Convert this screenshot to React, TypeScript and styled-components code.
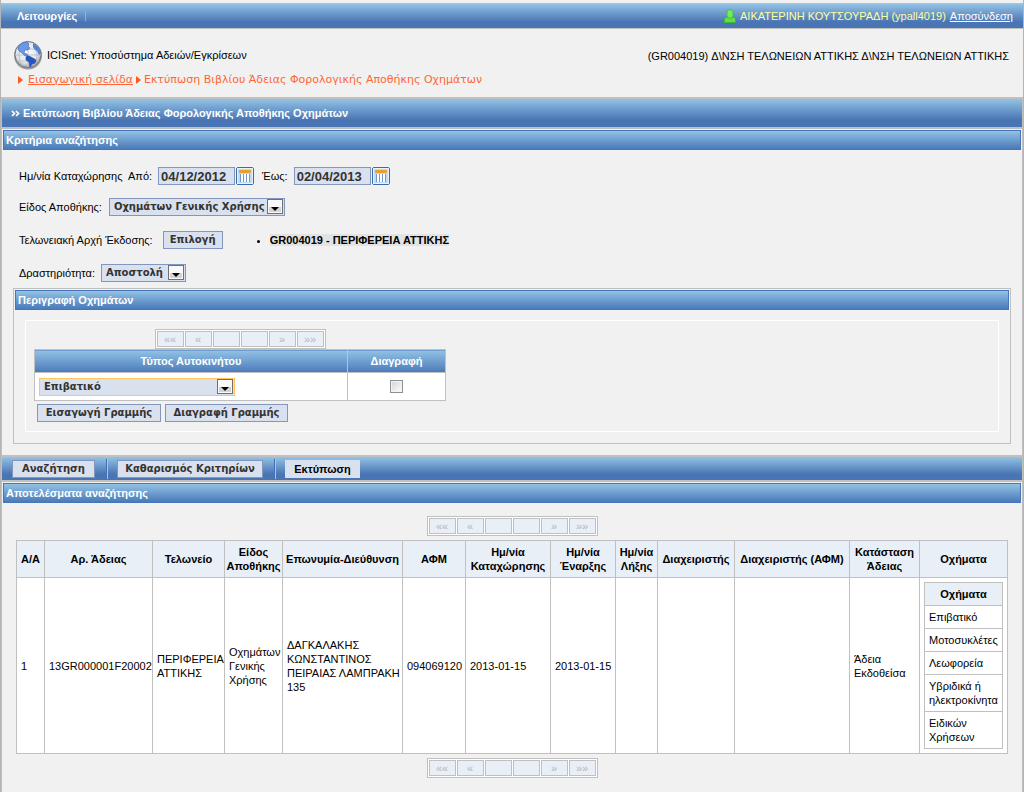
import React from 'react';
import styled, { createGlobalStyle } from 'styled-components';

const GlobalStyle = createGlobalStyle`
  * { box-sizing: border-box; }
  body {
    margin: 0;
    background: #f1f1f1;
    font: 11px/14px "Liberation Sans", Arial, sans-serif;
    color: #000;
  }
`;

const line = '#c0c0c0';
const blue = 'linear-gradient(#92c2e4, #4a75b5 75%)';
const strip = 'linear-gradient(#92c2e4, #4a7ab9)';
const wide = '"DejaVu Sans", Verdana, sans-serif';

const Page = styled.div`
  min-height: 100vh;
  padding-top: 3px;
  border-left: 1px solid #b4b4b4;
  border-right: 1px solid #b4b4b4;
`;

const NavBar = styled.nav`
  display: flex;
  align-items: center;
  height: 26px;
  padding: 0 10px 0 16px;
  border-top: 1px solid ${line};
  border-bottom: 1px solid ${line};
  background: ${blue};
  color: #fff;
`;

const NavItem = styled.a`
  padding-right: 8px;
  border-right: 1px solid #8fb4dc;
  line-height: 10px;
  font-weight: bold;
  color: #fff;
  text-decoration: none;
`;

const User = styled.div`
  display: flex;
  align-items: center;
  gap: 4px;
  margin-left: auto;
  color: #ffff99;
`;

const NavLink = styled.a`
  color: #fff;
`;

const Header = styled.header`
  display: flex;
  justify-content: space-between;
  height: 68px;
  padding: 10px 14px 0 12px;
`;

const Brand = styled.div`
  display: flex;
  align-items: center;
  height: 32px;
  gap: 4px;
`;

const Office = styled.div`
  padding-top: 10px;
`;

const Crumbs = styled.div`
  display: flex;
  align-items: center;
  gap: 3px;
  padding-left: 5px;
  font: 11px/18px ${wide};
  color: #ff6633;

  a {
    margin-left: 2px;
    color: inherit;
  }
`;

const Main = styled.main`
  border-left: 1px solid ${line};
  border-right: 1px solid ${line};
`;

const PageTitle = styled.h1`
  height: 32px;
  margin: 0;
  padding-left: 9px;
  border-top: 2px solid ${line};
  border-bottom: 2px solid ${line};
  background: ${blue};
  font: bold 11px/29px "Liberation Sans", Arial, sans-serif;
  color: #fff;
`;

const SectionTitle = styled.h2`
  height: 20px;
  margin: 1px 1px 0;
  padding-left: 2px;
  border: 1px solid #4676b8;
  background: ${strip};
  font: bold 11px/18px "Liberation Sans", Arial, sans-serif;
  color: #fff;
`;

const Criteria = styled.form`
  margin: 0;
`;

const Field = styled.div<{ $top: number }>`
  display: flex;
  align-items: center;
  height: 18px;
  margin-top: ${(p) => p.$top}px;
  padding-left: 17px;
`;

const Label = styled.label<{ $gap: number }>`
  margin-right: ${(p) => p.$gap}px;
  white-space: nowrap;
`;

const DateBox = styled.input`
  width: 77px;
  height: 18px;
  padding: 1px 2px;
  border: 1px solid #8296be;
  background: #d9e0ee;
  font: bold 13px "Liberation Sans", Arial, sans-serif;
  color: #333;
`;

const IconButton = styled.button`
  display: block;
  width: 18px;
  height: 18px;
  margin: 0 8px 0 1px;
  padding: 0;
  border: 0;
  background: none;

  svg { display: block; }
`;

const SelectFrame = styled.span<{ $width: number; $active?: boolean }>`
  display: grid;
  grid-template-columns: 1fr 18px;
  width: ${(p) => p.$width}px;
  height: 18px;
  border: 1px solid ${(p) => (p.$active ? '#ffc55c' : '#8296be')};
  background: #d9e0ee;

  select, svg { grid-row: 1; }
  select {
    grid-column: 1 / 3;
    appearance: none;
    height: 16px;
    padding: 0 4px;
    border: 0;
    background: none;
    font: bold 10px/16px ${wide};
    color: #333;
  }
  svg { grid-column: 2; pointer-events: none; }
`;

const Button = styled.button<{ $width: number }>`
  width: ${(p) => p.$width}px;
  height: 18px;
  padding: 0;
  border: 1px solid #8296be;
  background: #d9e0ee;
  font: bold 10px/16px ${wide};
  color: #333;
  white-space: nowrap;
`;

const PlainButton = styled(Button)`
  border-color: #d9e0ee;
  font-family: "Liberation Sans", Arial, sans-serif;
  font-size: 11px;
  color: #000;
`;

const Offices = styled.ul`
  margin: 0 0 0 47px;
  padding: 0;
  font-weight: bold;

  span { background: #e3e3e3; }
`;

const Vehicles = styled.fieldset`
  height: 156px;
  min-width: 0;
  margin: 6px 11px 0 11px;
  padding: 0 0 11px;
  border: 1px solid ${line};
`;

const Inner = styled.div`
  height: 112px;
  margin: 10px 11px 0;
  padding: 8px 9px 0 8px;
  border: 1px solid #fff;
`;

const VehicleGrid = styled.div`
  display: flex;
  flex-direction: column;
  align-items: center;
  width: 412px;
`;

const PagerFrame = styled.div`
  display: flex;
  gap: 1px;
  width: 171px;
  height: 20px;
  padding: 1px;
  border: 1px solid ${line};
  background: #fff;

  button {
    width: 27px;
    height: 16px;
    padding: 0;
    border: 1px solid ${line};
    background: #e8eff7;
    font: 11px/14px "Liberation Sans", Arial, sans-serif;
    color: #b4b4b4;
  }
`;

const VehicleTable = styled.table`
  width: 100%;
  border-collapse: collapse;
  background: #fff;

  th, td { border: 1px solid ${line}; }
  th {
    height: 23px;
    padding: 0;
    background: ${strip};
    color: #fff;
  }
  td { height: 28px; padding: 0 4px; }
  td:last-child { text-align: center; }
  input { display: block; width: 13px; height: 13px; margin: 0 auto; }
`;

const CheckBox = styled.input`
  appearance: none;
  border: 1px solid #8e8f8f;
  background: linear-gradient(135deg, #cfd3da, #fff);
  box-shadow: inset 0 0 0 1px #f4f4f4;
`;

const RowActions = styled.div`
  display: flex;
  gap: 4px;
  padding: 3px 0 0 3px;
`;

const ActionBar = styled.div`
  display: flex;
  align-items: center;
  height: 27px;
  margin-top: 11px;
  padding-left: 10px;
  border-top: 2px solid ${line};
  border-bottom: 2px solid ${line};
  background: ${blue};
`;

const Divider = styled.span`
  width: 2px;
  height: 20px;
  margin: 0 9px 0 11px;
  border-left: 1px solid #4070b4;
  border-right: 1px solid #a8c8e8;
`;

const Results = styled.section`
  padding-bottom: 14px;

  ${SectionTitle} { margin-bottom: 13px; }
  ${PagerFrame} { margin: 0 auto; }
`;

const ResultTable = styled.table`
  width: calc(100% - 28px);
  margin: 4px 14px;
  border-collapse: collapse;
  table-layout: fixed;
  background: #fff;

  th, td { border: 1px solid ${line}; }
  th {
    padding: 4px 0;
    background: #e8eff7;
    text-align: center;
  }
  td {
    padding: 4px 0 4px 4px;
    text-align: left;
  }
  td:last-child { padding-right: 4px; }
`;

const TypeTable = styled.table`
  width: 100%;
  border-collapse: collapse;

  td:last-child { padding-right: 0; }
`;

const Globe = () => (
  <svg width="30" height="30" viewBox="0 0 30 30" aria-hidden="true">
    <defs>
      <radialGradient id="sea" cx="45%" cy="40%" r="60%">
        <stop offset="0" stopColor="#fff" />
        <stop offset="0.7" stopColor="#dfe3ea" />
        <stop offset="1" stopColor="#a4a9b2" />
      </radialGradient>
    </defs>
    <circle cx="15" cy="15.500" r="14" fill="#999" />
    <circle cx="15" cy="14.500" r="13" fill="url(#sea)" stroke="#777" />
    <path d="M4 9h22M2 15h26M4 21h22M15 2v25M9 3q-6 12 0 23M21 3q6 12 0 23" fill="none" stroke="#b4bac4" strokeWidth="0.800" />
    <path d="M6 6Q9 2 14 2L16 4L15 6L17 8L15 10L12 10L11 13L14 14L15 16L12 16L9 13L6 11L5 8Z" fill="#6a9ae6" stroke="#3a68bc" strokeWidth="0.600" />
    <path d="M13 17Q15 15 18 17L23 20L22 23L19 24L17 27L16 22L13 20Z" fill="#2458bc" stroke="#1c4698" strokeWidth="0.600" />
    <path d="M20 3Q26 6 28 13L26 15L24 11L22 10L20 7Z" fill="#4f83d8" />
  </svg>
);

const Person = () => (
  <svg width="12" height="14" viewBox="0 0 12 14" aria-hidden="true">
    <path d="M0.500 13.500V10.500Q0.500 8 3 8H9Q11.500 8 11.500 10.500V13.500Z" fill="#5ee048" stroke="#3cb834" />
    <path d="M3 3.500Q3 0.500 6 0.500Q9 0.500 9 3.500V6.500L7.500 9H4.500L3 6.500Z" fill="#78ea5e" stroke="#46c03c" />
  </svg>
);

const Arrow = () => (
  <svg width="5" height="8" viewBox="0 0 5 8" aria-hidden="true">
    <path d="M0 0L5 4L0 8Z" fill="#ff5a1e" />
  </svg>
);

const Guillemet = () => (
  <svg width="9" height="7" viewBox="0 0 9 7" aria-hidden="true">
    <path d="M1 1L3.500 3.500L1 6M5 1L7.500 3.500L5 6" fill="none" stroke="#fff" strokeWidth="1.700" />
  </svg>
);

const Calendar = () => (
  <svg width="18" height="18" viewBox="0 0 18 18" aria-hidden="true">
    <rect x="0.500" y="0.500" width="17" height="17" rx="1.500" fill="#c4dbf5" stroke="#3a6cb4" />
    <rect x="1.500" y="1.500" width="15" height="15" fill="none" stroke="#e6f1fc" />
    <rect x="4" y="6" width="10" height="9" fill="#fff" />
    <rect x="3" y="3" width="12" height="3" rx="1" fill="#e8a02c" />
    <path d="M4.500 6V15M7.500 6V15M10.500 6V15M13.500 6V15" stroke="#7398cc" />
    <path d="M3 6.500H15" stroke="#f4d48c" />
  </svg>
);

const DropArrow = () => (
  <svg width="18" height="16" viewBox="0 0 18 16" aria-hidden="true">
    <rect x="1.500" y="0.500" width="15" height="14" fill="#f8f8f8" stroke="#707070" />
    <path d="M3 8H15V13H3Z" fill="#d4d4d4" />
    <path d="M5 8H13L9 12Z" fill="#000" />
  </svg>
);

const Select = ({ id, width, value, active }: { id: string; width: number; value: string; active?: boolean }) => (
  <SelectFrame $width={width} $active={active}>
    <select id={id} aria-label={active ? 'Τύπος Αυτοκινήτου' : undefined} defaultValue={value}>
      <option>{value}</option>
    </select>
    <DropArrow />
  </SelectFrame>
);

const Pager = () => (
  <PagerFrame>
    {['««', '«', '', '', '»', '»»'].map((text, i) => (
      <button type="button" key={i}>{text}</button>
    ))}
  </PagerFrame>
);

const columns: [string, number][] = [
  ['Α/Α', 28], ['Αρ. Άδειας', 108], ['Τελωνείο', 72], ['Είδος Αποθήκης', 58],
  ['Επωνυμία-Διεύθυνση', 120], ['ΑΦΜ', 63], ['Ημ/νία Καταχώρησης', 85],
  ['Ημ/νία Έναρξης', 65], ['Ημ/νία Λήξης', 42], ['Διαχειριστής', 77],
  ['Διαχειριστής (ΑΦΜ)', 115], ['Κατάσταση Άδειας', 70], ['Οχήματα', 88],
];

const values = [
  '1', '13GR000001F20002', 'ΠΕΡΙΦΕΡΕΙΑ ΑΤΤΙΚΗΣ', 'Οχημάτων Γενικής Χρήσης',
  'ΔΑΓΚΑΛΑΚΗΣ ΚΩΝΣΤΑΝΤΙΝΟΣ ΠΕΙΡΑΙΑΣ ΛΑΜΠΡΑΚΗ 135', '094069120', '2013-01-15',
  '2013-01-15', '', '', '', 'Άδεια Εκδοθείσα',
];

const types = ['Επιβατικό', 'Μοτοσυκλέτες', 'Λεωφορεία', 'Υβριδικά ή ηλεκτροκίνητα', 'Ειδικών Χρήσεων'];

export default function App() {
  return (
    <Page>
      <GlobalStyle />
      <NavBar>
        <NavItem href="#menu">Λειτουργίες</NavItem>
        <User>
          <Person />
          <span>ΑΙΚΑΤΕΡΙΝΗ ΚΟΥΤΣΟΥΡΑΔΗ (ypall4019)</span>
          <NavLink href="#logout">Αποσύνδεση</NavLink>
        </User>
      </NavBar>
      <Header>
        <div>
          <Brand>
            <Globe />
            <span>ICISnet: Υποσύστημα Αδειών/Εγκρίσεων</span>
          </Brand>
          <Crumbs>
            <Arrow />
            <a href="#home">Εισαγωγική σελίδα</a>
            <Arrow />
            <span>Εκτύπωση Βιβλίου Άδειας Φορολογικής Αποθήκης Οχημάτων</span>
          </Crumbs>
        </div>
        <Office>(GR004019) Δ\ΝΣΗ ΤΕΛΩΝΕΙΩΝ ΑΤΤΙΚΗΣ Δ\ΝΣΗ ΤΕΛΩΝΕΙΩΝ ΑΤΤΙΚΗΣ</Office>
      </Header>
      <Main>
        <PageTitle><Guillemet /> Εκτύπωση Βιβλίου Άδειας Φορολογικής Αποθήκης Οχημάτων</PageTitle>
        <Criteria>
          <SectionTitle>Κριτήρια αναζήτησης</SectionTitle>
          <Field $top={17}>
            <Label htmlFor="from" $gap={6}>Ημ/νία Καταχώρησης&nbsp; Από:</Label>
            <DateBox id="from" defaultValue="04/12/2012" />
            <IconButton type="button" aria-label="Ημερολόγιο"><Calendar /></IconButton>
            <Label htmlFor="to" $gap={6}>Έως:</Label>
            <DateBox id="to" defaultValue="02/04/2013" />
            <IconButton type="button" aria-label="Ημερολόγιο"><Calendar /></IconButton>
          </Field>
          <Field $top={13}>
            <Label htmlFor="kind" $gap={7}>Είδος Αποθήκης:</Label>
            <Select id="kind" width={176} value="Οχημάτων Γενικής Χρήσης" />
          </Field>
          <Field $top={15}>
            <Label htmlFor="office" $gap={10}>Τελωνειακή Αρχή Έκδοσης:</Label>
            <Button id="office" type="button" $width={60}>Επιλογή</Button>
            <Offices><li><span>GR004019 - ΠΕΡΙΦΕΡΕΙΑ ΑΤΤΙΚΗΣ</span></li></Offices>
          </Field>
          <Field $top={15}>
            <Label htmlFor="activity" $gap={6}>Δραστηριότητα:</Label>
            <Select id="activity" width={85} value="Αποστολή" />
          </Field>
          <Vehicles>
            <SectionTitle>Περιγραφή Οχημάτων</SectionTitle>
            <Inner>
              <VehicleGrid>
                <Pager />
                <VehicleTable>
                  <colgroup><col width="313" /><col /></colgroup>
                  <thead><tr><th>Τύπος Αυτοκινήτου</th><th>Διαγραφή</th></tr></thead>
                  <tbody>
                    <tr>
                      <td><Select id="type" width={196} value="Επιβατικό" active /></td>
                      <td><CheckBox type="checkbox" aria-label="Διαγραφή" /></td>
                    </tr>
                  </tbody>
                </VehicleTable>
              </VehicleGrid>
              <RowActions>
                <Button type="button" $width={124}>Εισαγωγή Γραμμής</Button>
                <Button type="button" $width={123}>Διαγραφή Γραμμής</Button>
              </RowActions>
            </Inner>
          </Vehicles>
          <ActionBar>
            <Button type="button" $width={83}>Αναζήτηση</Button>
            <Divider />
            <Button type="button" $width={146}>Καθαρισμός Κριτηρίων</Button>
            <Divider />
            <PlainButton type="button" $width={75}>Εκτύπωση</PlainButton>
          </ActionBar>
        </Criteria>
        <Results>
          <SectionTitle>Αποτελέσματα αναζήτησης</SectionTitle>
          <Pager />
          <ResultTable>
            <colgroup>{columns.map(([name, width]) => <col key={name} width={width} />)}</colgroup>
            <thead><tr>{columns.map(([name]) => <th key={name}>{name}</th>)}</tr></thead>
            <tbody>
              <tr>
                {values.map((value, i) => <td key={i}>{value}</td>)}
                <td>
                  <TypeTable>
                    <thead><tr><th>Οχήματα</th></tr></thead>
                    <tbody>{types.map((type) => <tr key={type}><td>{type}</td></tr>)}</tbody>
                  </TypeTable>
                </td>
              </tr>
            </tbody>
          </ResultTable>
          <Pager />
        </Results>
      </Main>
    </Page>
  );
}
